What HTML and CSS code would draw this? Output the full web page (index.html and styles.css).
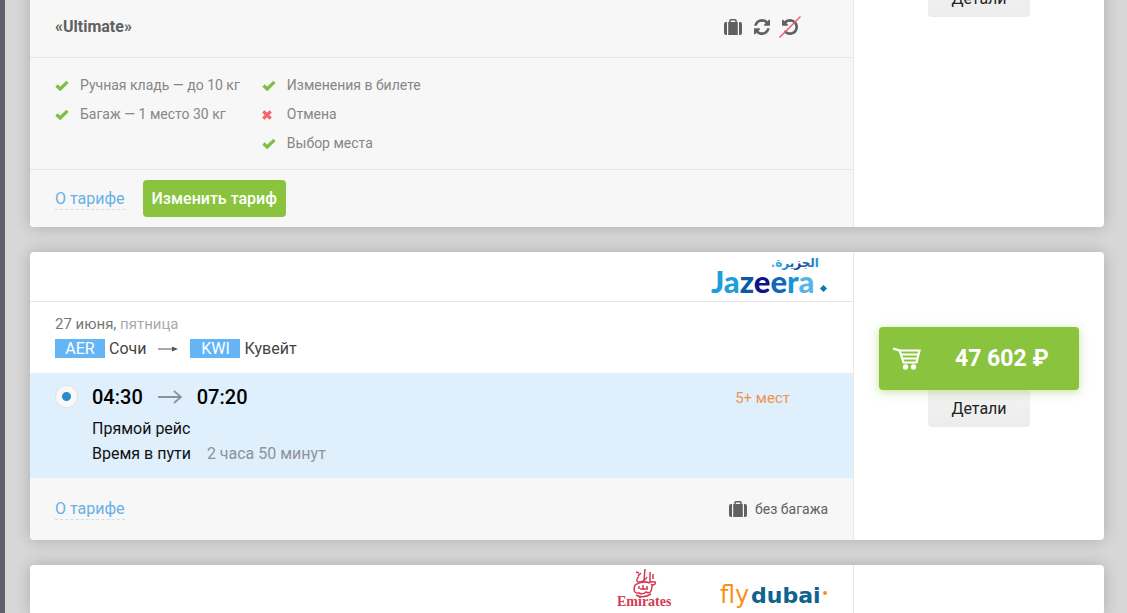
FILE: index.html
```html
<!DOCTYPE html>
<html lang="ru">
<head>
  <meta charset="UTF-8">
  <meta name="viewport" content="width=device-width, initial-scale=1.0">
  <title>Авиабилеты</title>
  <link rel="stylesheet" href="styles.css">
</head>
<body>

<!-- shared icons -->
<svg class="sprite" aria-hidden="true">
  <symbol id="check" viewBox="0 0 14 12">
    <path d="M1.5 5.500 L5.2 9 L12.500 1.800" fill="none" stroke="currentColor" stroke-width="3.2"/>
  </symbol>
  <symbol id="cross" viewBox="0 0 10 10">
    <path d="M1.3 1.3 L8.7 8.7 M8.7 1.3 L1.3 8.7" fill="none" stroke="currentColor" stroke-width="3.2"/>
  </symbol>
  <symbol id="suitcase" viewBox="0 0 18 16">
    <path d="M6 3 V1.6 Q6 .8 6.8 .8 H11.2 Q12 .8 12 1.6 V3" fill="none" stroke="currentColor" stroke-width="1.5"/>
    <path d="M4.2 3 H13.8 V16 H4.2 Z M3 3 V16 H2 Q0 16 0 14 V5 Q0 3 2 3 Z M15 3 H16 Q18 3 18 5 V14 Q18 16 16 16 H15 Z" fill="currentColor"/>
  </symbol>
  <symbol id="refresh" viewBox="0 0 1536 1536">
    <path fill="currentColor" d="M1511 928q0 5-1 7-64 268-268 434.500T764 1536q-146 0-282.500-55T238 1324l-129 129q-19 19-45 19t-45-19-19-45V960q0-26 19-45t45-19h448q26 0 45 19t19 45-19 45l-137 137q71 66 161 102t187 36q134 0 250-65t186-179q11-17 53-117 8-23 30-23h192q13 0 22.500 9.500t9.500 22.500zm25-800v448q0 26-19 45t-45 19h-448q-26 0-45-19t-19-45 19-45l138-138Q969 256 768 256q-134 0-250 65T332 500q-11 17-53 117-8 23-30 23H50q-13 0-22.500-9.500T18 608v-7q65-268 270-434.500T768 0q146 0 284 55.500T1297 212l130-129q19-19 45-19t45 19 19 45z"/>
  </symbol>
  <symbol id="undo" viewBox="0 0 1536 1536">
    <path fill="currentColor" d="M1536 768q0 156-61 298t-164 245-245 164-298 61q-172 0-327-72.500T177 1259q-7-10-6.500-22.500t8.500-20.500l137-138q10-9 25-9 16 2 23 12 73 95 179 147t225 52q104 0 198.500-40.500T1130 1130t109.500-163.500T1280 768t-40.500-198.500T1130 406 966.500 296.500 768 256q-98 0-188 35.500T420 393l137 138q31 30 14 69-17 40-59 40H64q-26 0-45-19T0 576V128q0-42 40-59 39-17 69 14l130 129q107-101 244.500-156.500T768 0q156 0 298 61t245 164 164 245 61 298z"/>
  </symbol>
</svg>

<main class="offers">

  <article class="card card--first">
    <div class="card-main">
      <div class="tariff-head">
        <b>«Ultimate»</b>
        <div class="tariff-icons">
          <svg class="ico-bag"><use href="#suitcase"/></svg>
          <svg class="ico-round"><use href="#refresh"/></svg>
          <span class="no-refund">
            <svg class="ico-round"><use href="#undo"/></svg>
            <svg class="strike" viewBox="0 0 22 22"><path d="M.5 21.500 L21.500 .5" stroke="#ec5f69" stroke-width="1.400"/></svg>
          </span>
        </div>
      </div>
      <div class="options">
        <ul>
          <li><svg class="yes"><use href="#check"/></svg>Ручная кладь — до 10 кг</li>
          <li><svg class="yes"><use href="#check"/></svg>Багаж — 1 место 30 кг</li>
        </ul>
        <ul>
          <li><svg class="yes"><use href="#check"/></svg>Изменения в билете</li>
          <li><svg class="no"><use href="#cross"/></svg>Отмена</li>
          <li><svg class="yes"><use href="#check"/></svg>Выбор места</li>
        </ul>
      </div>
      <div class="tariff-foot">
        <a class="about" href="#">О тарифе</a>
        <button class="change" type="button">Изменить тариф</button>
      </div>
    </div>
    <aside class="card-side">
      <button class="details" type="button">Детали</button>
    </aside>
  </article>

  <article class="card">
    <div class="card-main">
      <div class="airlines">
        <svg class="logo-jazeera" viewBox="0 0 118 46" role="img" aria-label="Jazeera">
          <defs>
            <linearGradient id="jz-fill">
              <stop offset="0" stop-color="#62bdea"/>
              <stop offset=".3" stop-color="#1b93d3"/>
              <stop offset=".6" stop-color="#123a9b"/>
              <stop offset="1" stop-color="#2b9fda"/>
            </linearGradient>
          </defs>
          <text class="jz-ar" x="109" y="12" direction="rtl" fill="url(#jz-fill)">الجزيرة.</text>
          <text class="jz-en" x="1" y="38"><tspan fill="#1c9fdc">Ja</tspan><tspan fill="#0a59a8">z</tspan><tspan fill="#10128a">e</tspan><tspan fill="#1268b5">e</tspan><tspan fill="#1c93d4">r</tspan><tspan fill="#56b5e6">a</tspan></text>
          <path d="M113.500 30 L117 33.500 L113.500 37 L110 33.500 Z" fill="#1273bb"/>
        </svg>
      </div>
      <div class="route">
        <div class="date">27 июня, <span>пятница</span></div>
        <div class="cities">
          <span class="code">AER</span><span class="city">Сочи</span>
          <svg class="arrow-sm" viewBox="0 0 20 8"><path d="M0 4 H15" stroke="#555"/><path d="M14 1.500 L20 4 L14 6.500 Z" fill="#555"/></svg>
          <span class="code">KWI</span><span class="city">Кувейт</span>
        </div>
      </div>
      <div class="flight">
        <input type="radio" name="flight" id="flight1" checked>
        <label class="flight-info" for="flight1">
          <span class="times">
            04:30
            <svg class="arrow" viewBox="0 0 24 14"><path d="M0 7 H23 M16 1 L23 7 L16 13" fill="none" stroke="#8b9299" stroke-width="1.800"/></svg>
            07:20
          </span>
          <span>Прямой рейс</span>
          <span>Время в пути <span class="duration">2 часа 50 минут</span></span>
        </label>
        <span class="seats">5+ мест</span>
      </div>
      <div class="card-foot">
        <a class="about" href="#">О тарифе</a>
        <span class="baggage"><svg class="ico-bag"><use href="#suitcase"/></svg>без багажа</span>
      </div>
    </div>
    <aside class="card-side card-side--buy">
      <button class="buy" type="button">
        <svg viewBox="0 0 28 23" fill="none" stroke="#fff" stroke-width="2.200">
          <path d="M0 1.500 L6.500 3.500 L10.500 15.500 H23.500 L26.500 3.500 H6.500 M8.500 7.500 H25 M9.500 11.500 H24"/>
          <circle cx="12.500" cy="20" r="2.700" fill="#fff" stroke="none"/>
          <circle cx="20.500" cy="20" r="2.700" fill="#fff" stroke="none"/>
        </svg>
        <span>47 602 ₽</span>
      </button>
      <button class="details" type="button">Детали</button>
    </aside>
  </article>

  <article class="card">
    <div class="card-main">
      <div class="airlines">
        <svg class="logo-emirates" viewBox="0 0 56 46" role="img" aria-label="Emirates">
          <g fill="none" stroke="#d43a50" stroke-width="1.500">
            <path d="M28 1 L27 12 M33 4 V14 M24 5 L21 8 M22 8 Q17 14 23 14 Q28 13 30 9 M36 6 V11 M19 4 L22 5"/>
            <path d="M18 17 Q25 12 33 15 M33 14 Q40 13 38 16 Q36 18 34 16 M18 17 Q15 26 22 25 Q26 27 29 24 Q35 27 35 17"/>
            <path d="M22 18 V21 M26 17 V22 M30 18 V21 M19 27 Q26 31 34 26 M23 21 H31"/>
          </g>
          <text x="0" y="38">Emirates</text>
        </svg>
        <svg class="logo-flydubai" viewBox="0 0 108 46" role="img" aria-label="flydubai">
          <text class="fd-fly" x="0" y="35">fly</text>
          <text class="fd-dubai" x="31" y="35">dubai</text>
          <circle cx="105" cy="25" r="2" fill="#f5921e"/>
        </svg>
      </div>
    </div>
    <aside class="card-side"></aside>
  </article>

</main>

</body>
</html>
```
FILE: styles.css
```css
:root {
  --green: #8ac43f;
  --blue: #64b5f6;
  --link: #69b0e6;
  --line: #e7e7e7;
  --gray: #f7f7f7;
}
* {
  box-sizing: border-box;
}
body {
  margin: 0;
  height: 100vh;
  overflow: hidden;
  background: #d7d7d7;
  border-left: 5px solid #605f6b;
  font-family: Roboto, "Open Sans", sans-serif;
  font-size: 16px;
  line-height: 20px;
  color: #222;
}
button {
  font: inherit;
  border: none;
  cursor: pointer;
}
svg {
  display: block;
  flex: none;
}
.sprite {
  display: none;
}
.offers {
  display: flex;
  flex-direction: column;
  gap: 25px;
  padding: 0 23px 0 25px;
}

/* card */
.card {
  display: flex;
  flex: none;
  background: #fff;
  border-radius: 4px;
  box-shadow: 0 0 16px rgba(0, 0, 0, 0.2);
}
/* first card is scrolled partly off the top */
.card--first {
  margin-top: -20px;
}
.card-main {
  flex: 1;
  border-right: 1px solid var(--line);
}
.card-side {
  width: 250px;
  display: flex;
  flex-direction: column;
  align-items: center;
}
.card-side--buy {
  padding-top: 75px;
}

/* tariff */
.tariff-head,
.options,
.tariff-foot,
.card-foot {
  background: var(--gray);
  padding: 0 25px;
}
.tariff-head {
  display: flex;
  align-items: center;
  justify-content: space-between;
  height: 78px;
  padding-top: 16px;
  border-bottom: 1px solid var(--line);
  color: #606060;
}
.tariff-head b {
  font-weight: 700;
}
.tariff-icons {
  display: flex;
  align-items: center;
  gap: 12px;
  margin-right: 30px;
}
.ico-bag {
  width: 18px;
  height: 16px;
  color: #606060;
}
.ico-round {
  width: 16px;
  height: 16px;
}
.no-refund {
  position: relative;
}
.strike {
  position: absolute;
  left: -3px;
  top: -3px;
  width: 22px;
  height: 22px;
}
.options {
  display: flex;
  gap: 22px;
  height: 112px;
  padding-top: 17px;
  border-bottom: 1px solid var(--line);
  font-size: 14px;
  color: #868686;
}
.options ul {
  list-style: none;
  margin: 0;
  padding: 0;
}
.options li {
  display: grid;
  grid-template-columns: 25px auto;
  align-items: center;
  line-height: 21px;
  margin-bottom: 8px;
}
.yes {
  width: 14px;
  height: 12px;
  color: #7cbf42;
}
.no {
  width: 10px;
  height: 10px;
  color: #f2646a;
}
.tariff-foot {
  display: flex;
  align-items: center;
  gap: 18px;
  height: 57px;
  border-radius: 0 0 0 4px;
}
.about {
  padding-top: 1px;
  color: var(--link);
  text-decoration: none;
  border-bottom: 1px dashed #c9dff0;
}
.change {
  height: 37px;
  padding: 0 9px;
  border-radius: 4px;
  background: var(--green);
  color: #fff;
  font-weight: 500;
}

/* flight card */
.airlines {
  display: flex;
  justify-content: flex-end;
  gap: 47px;
  height: 50px;
  padding: 3px 25px 0;
  border-bottom: 1px solid var(--line);
}
.route {
  height: 71px;
  padding: 12px 25px 0;
}
.date {
  font-size: 15px;
  color: #777;
}
.date span {
  color: #aaa;
}
.cities {
  display: flex;
  align-items: center;
  height: 29px;
  color: #444;
}
.code {
  width: 50px;
  line-height: 19px;
  margin-right: 4px;
  background: var(--blue);
  color: #fff;
  text-align: center;
}
.arrow-sm {
  width: 20px;
  height: 8px;
  margin: 0 12px;
}
.flight {
  display: flex;
  align-items: flex-start;
  height: 105px;
  padding: 11px 63px 0 25px;
  background: #dfeffc;
  color: #111;
}
.flight input {
  appearance: none;
  flex: none;
  width: 23px;
  height: 23px;
  margin: 1px 14px 0 0;
  border: 1px solid #e4e4e4;
  border-radius: 50%;
  background: radial-gradient(circle, #2a8dcb 4px, #f8f8f8 5px);
}
.flight-info {
  flex: 1;
  display: flex;
  flex-direction: column;
  gap: 5px;
}
.times {
  display: flex;
  align-items: center;
  gap: 15px;
  height: 26px;
  margin-bottom: 4px;
  font-size: 20px;
  font-weight: 500;
  color: #000;
}
.arrow {
  width: 24px;
  height: 14px;
}
.duration {
  margin-left: 12px;
  color: #8d9398;
}
.seats {
  font-size: 15px;
  line-height: 28px;
  color: #f39150;
}
.card-foot {
  display: flex;
  align-items: center;
  justify-content: space-between;
  height: 62px;
  border-radius: 0 0 0 4px;
}
.baggage {
  display: flex;
  align-items: center;
  gap: 8px;
  font-size: 14px;
  color: #606060;
}

/* price column */
.buy {
  position: relative;
  display: flex;
  align-items: center;
  gap: 34px;
  width: 200px;
  height: 63px;
  padding: 0 14px;
  border-radius: 4px;
  background: var(--green);
  box-shadow: 0 2px 10px rgba(138, 196, 63, 0.5);
  color: #fff;
  font-size: 23px;
  font-weight: 700;
}
.buy svg {
  width: 28px;
  height: 23px;
}
.details {
  width: 102px;
  height: 37px;
  padding: 0;
  border-radius: 0 0 4px 4px;
  background: linear-gradient(#f3f3f3, #ececec);
  color: #222;
}

/* airline logos */
.logo-jazeera {
  width: 118px;
  height: 46px;
}
.jz-ar {
  font: bold 12px "DejaVu Sans", sans-serif;
}
.jz-en {
  font: 900 31px Lato, sans-serif;
}
.logo-emirates {
  width: 56px;
  height: 46px;
}
.logo-emirates text {
  font: bold 14px "Liberation Serif", serif;
  fill: #d43a50;
}
.logo-flydubai {
  width: 108px;
  height: 46px;
}
.fd-fly {
  font: 24px "DejaVu Sans", sans-serif;
  fill: #f5921e;
}
.fd-dubai {
  font: bold 22px "DejaVu Sans", sans-serif;
  fill: #10628f;
}
```
